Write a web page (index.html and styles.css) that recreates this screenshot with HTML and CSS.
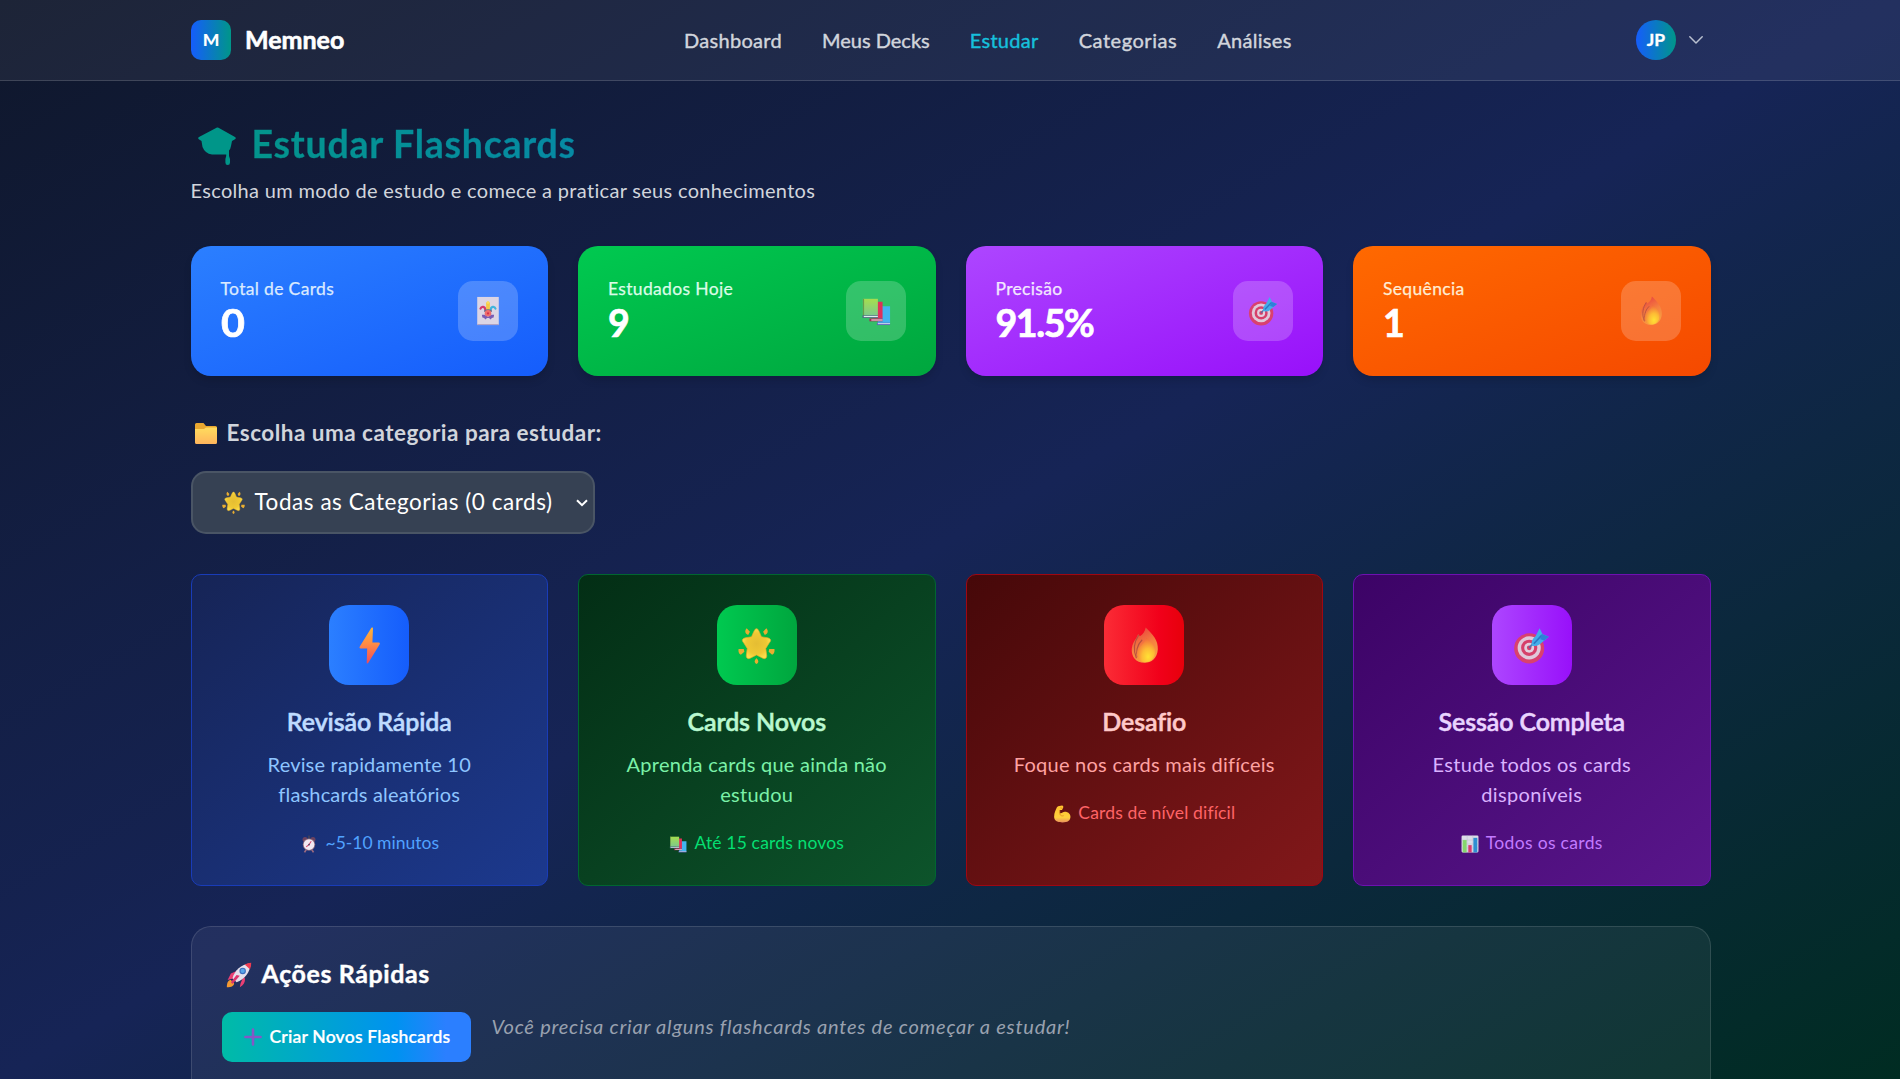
FILE: index.html
```html
<!DOCTYPE html>
<html lang="pt-BR">
<head>
<meta charset="utf-8">
<title>Memneo - Estudar</title>
<link rel="stylesheet" href="styles.css">
</head>
<body>
<svg class="defs" aria-hidden="true">
  <defs>
    <linearGradient id="g-bolt" x1="0" y1="0" x2="0" y2="1"><stop offset="0" stop-color="#fcb53a"/><stop offset=".45" stop-color="#ff8c44"/><stop offset="1" stop-color="#ee4a5c"/></linearGradient>
    <linearGradient id="g-fire" x1=".3" y1="0" x2=".7" y2="1"><stop offset="0" stop-color="#e8413f"/><stop offset=".5" stop-color="#f58040"/><stop offset="1" stop-color="#f9a541"/></linearGradient>
    <radialGradient id="g-flame" cx=".62" cy=".78" r=".75"><stop offset="0" stop-color="#ffe235"/><stop offset=".45" stop-color="#fdbb35"/><stop offset="1" stop-color="#f2683c"/></radialGradient>
    <linearGradient id="g-folder" x1="0" y1="0" x2="0" y2="1"><stop offset="0" stop-color="#ffdc5e"/><stop offset="1" stop-color="#ffb55c"/></linearGradient>
    <radialGradient id="g-star"><stop offset="0" stop-color="#e5bd33"/><stop offset=".7" stop-color="#efc834"/><stop offset="1" stop-color="#fbdd4a"/></radialGradient>
    <linearGradient id="g-book" x1="0" y1="0" x2="0" y2="1"><stop offset="0" stop-color="#a6dd4e"/><stop offset="1" stop-color="#7cc98c"/></linearGradient>
    <linearGradient id="g-arm" x1="0" y1="0" x2="0" y2="1"><stop offset="0" stop-color="#ffc22e"/><stop offset=".7" stop-color="#ffcf3d"/><stop offset="1" stop-color="#e8905e"/></linearGradient>
  </defs>
  <symbol id="e-joker" viewBox="0 0 32 32">
    <path d="M4.500 1h23v30h-23z" fill="#dcd5e4"/><path d="M4.500 30h23v1h-23z" fill="#a99bc0"/>
    <path d="M14 15V8c0-3 4-3 4 0v7z" fill="#f5c945"/><circle cx="16" cy="7" r="1.400" fill="#fbdc5a"/>
    <path d="M13 14.500c0-3.500-4-4-5-1" fill="none" stroke="#d43a6c" stroke-width="2.300" stroke-linecap="round"/>
    <path d="M19 14.500c0-3.500 4-4 5-1" fill="none" stroke="#3fb4dc" stroke-width="2.300" stroke-linecap="round"/>
    <path d="M9.500 20l3 0 3.500 2 3.500-2 3 0-.5 3-2 .500-1 1.500-2-1.500h-2l-2 1.500-1-1.500-2-.500z" fill="#7a5bb4"/>
    <path d="M12 15q4-2 8 0v2h-8z" fill="#5f6b8e"/><circle cx="16" cy="18.300" r="3.500" fill="#ef6d6c"/><circle cx="16" cy="18.600" r="1.200" fill="#d6304c"/>
  </symbol>
  <symbol id="e-books" viewBox="0 0 32 32">
    <path d="M21 11h10v18H18v-2z" fill="#42b5ef"/><path d="M17 28.500h14v2.500H17z" fill="#5b66b8"/><path d="M18 29h13v1H18z" fill="#d5e4f6"/>
    <path d="M14 6h9v18H12z" fill="#df3159"/><path d="M9 24h14v3H9z" fill="#a32c55"/><path d="M11 25h12v1.200H11z" fill="#f3dbe6"/>
    <path d="M2 3h16v18H2z" fill="url(#g-book)"/><path d="M2 3h1.300v18H2z" fill="#6a9b4b"/><path d="M1.500 20.500h16.500v3H1.500z" fill="#4f7182"/><path d="M3 21.200h15v1.300H3z" fill="#dfeeee"/>
  </symbol>
  <symbol id="e-target" viewBox="0 0 32 32">
    <circle cx="14" cy="18.500" r="13" fill="#d9416e"/><circle cx="14" cy="18" r="10" fill="#e0c8da"/><circle cx="14" cy="18" r="7" fill="#d6406a"/><circle cx="14" cy="18" r="4.300" fill="#e2cfde"/><circle cx="14" cy="18" r="2" fill="#d6406a"/>
    <path d="M14 18l8-9" stroke="#596fa5" stroke-width="1.500"/>
    <path d="M16 16c0-4 1-6 3.500-8l3.500-7 2.500 5 5.500 2.500-6 5c-3 3-5 3.500-9 2.500z" fill="#42aee9"/><path d="M18 14.500l7-7.500" stroke="#2b78c5" stroke-width="1.500"/><path d="M25 6l6 2.500-4 3.200-3.500-1z" fill="#2f80d8"/>
  </symbol>
  <symbol id="e-fire" viewBox="0 0 32 32">
    <path d="M17 .5c6 6 11 11 10.500 19C27 27 22 31 16 31 8.500 31 4.500 25.500 5 19c.4-4.500 2-7 4-9.500l1.500-3.500 1.500 2C14.500 6.500 16.500 4 17 .5z" fill="url(#g-fire)"/>
    <path d="M11 7C7.500 12 5.800 19 9 27M14 11c-5 5-5.500 11-4 15" fill="none" stroke="#b9503f" stroke-width="1"/>
    <path d="M17.500 9c5 4 8.500 8.500 7.500 14-.8 5-4.500 7.500-8.500 7.500-5 0-7.500-4-7-8C10 17 16.500 15 17.500 9z" fill="url(#g-flame)"/>
  </symbol>
  <symbol id="e-folder" viewBox="0 0 22 21">
    <path d="M0 1.500Q0 0 1.500 0H8.500l2.500 3h9.500Q22 3 22 4.500V12H0z" fill="#e9a730"/><path d="M0 6h9l2-1.500h11v15Q22 21 20.500 21H1.500Q0 21 0 19.500z" fill="url(#g-folder)"/>
  </symbol>
  <symbol id="e-star" viewBox="0 0 32 32">
    <path d="M16 1.500c1.300 0 2 1.500 4.300 7l5.200.8c3 .7 3.500 2.500 1.500 4.500l-3 4.700.8 6c.2 2.800-1.400 3.500-3.800 2.300l-5-2.600-5 2.600c-2.400 1.200-4 .5-3.800-2.300l.8-6-3-4.700c-2-2-1.500-3.800 1.500-4.500l5.200-.8c2.300-5.500 3-7 4.300-7z" fill="url(#g-star)" stroke="#e3aa2b" stroke-width=".6"/>
    <g fill="#e9ad30"><path d="M7.500 1l2.800 3-1.500 3C6 6 5.500 3 7.500 1zM24.500 1l-2.800 3 1.500 3c2.800-1 3.300-4 1.300-6zM.5 19l4.500 0 .5 2.500L2.500 24C.5 23 .2 21 .5 19zM31.500 19l-4.500 0-.5 2.500 3 2.500c2-1 2.300-3 2-5zM16 27c2 2 2.200 3.500 0 5-2.200-1.500-2-3 0-5z"/></g>
  </symbol>
  <symbol id="e-bolt" viewBox="0 0 32 32"><path d="M17.500 .8c1-.8 1.700-.3 1.500.8L18.500 13.500H24c1 0 1.200.8.700 1.600L15 31c-.8 1-1.600.6-1.400-.6L14 18.500H8.300c-1 0-1.200-.8-.7-1.600z" fill="url(#g-bolt)"/></symbol>
  <symbol id="e-clock" viewBox="0 0 32 32">
    <path d="M11 26l-3 5M21 26l3 5" stroke="#9c6b80" stroke-width="3"/><circle cx="9" cy="8" r="4.500" fill="#6b4260"/><circle cx="23" cy="8" r="4.500" fill="#6b4260"/><path d="M14 1h4v6h-4z" fill="#3c3f5e"/>
    <circle cx="16" cy="17" r="11" fill="#93707f"/><circle cx="16" cy="17" r="9.500" fill="#f3e9f2"/><path d="M11 21l5-4 4-6" fill="none" stroke="#d8486d" stroke-width="1.800"/><circle cx="16" cy="17" r="1.500" fill="#45425f"/>
  </symbol>
  <symbol id="e-arm" viewBox="0 0 32 32"><path d="M9 2l7-1c2 0 3 2 2 4l-2 4-4 0v5c3 2 5-2 9-2 6 0 10 4 10 9 0 7-5 10-14 10-8 0-15-2-15-10C2 13 5 9 7 4z" fill="url(#g-arm)"/><path d="M12 9v7c1 3 4 4 7 3M13 5l4 1" fill="none" stroke="#df8a20" stroke-width="1.400"/></symbol>
  <symbol id="e-chart" viewBox="0 0 32 32"><rect x="1" y="1" width="30" height="30" rx="2" fill="#dcdde8"/><path d="M1 9h30M1 16h30M1 23h30M11 1v30M21 1v30" stroke="#b9bdd0" stroke-width=".8"/><path d="M3 9h7v22H3z" fill="#86d66d"/><path d="M13 18h6v13h-6z" fill="#d93a70"/><path d="M22 5h7v26h-7z" fill="#2f8fd2"/></symbol>
  <symbol id="e-rocket" viewBox="0 0 32 32">
    <path d="M6 22c-3 0-5 3-5 9 6 0 9-2 9-5z" fill="#f59a31"/><path d="M13 11L6 14l-4 8 8-2zM21 19l-3 7-1 5 3-2c3-3 4-6 3-10z" fill="#ea3f73"/>
    <path d="M8 20C11 10 18 3 30 1.500 30 13 23 21 13 25z" fill="#e6e0ec"/><path d="M23 3q4-2 8-2 .3 4-1.500 8z" fill="#ef3b51"/><circle cx="20.500" cy="11" r="4" fill="#3c6fc0"/><circle cx="20.500" cy="11" r="2.600" fill="#58a5ea"/><path d="M17 17l-9 10-2-2 7-9z" fill="#df356e"/>
  </symbol>
  <symbol id="e-plus" viewBox="0 0 32 32"><path d="M16 2.500v27M2.500 16h27" stroke="#8457c6" stroke-width="4.500" stroke-linecap="round"/></symbol>
  <symbol id="e-cap" viewBox="0 0 38 38"><path d="M19 .5Q19.500.2 20.500.8L37 10q1.500 1.200 0 2.300L34 14l-1 5q-.5 3-2 4.500v5.500l1 3v3.500q0 2.500-2.300 2.500T27.400 35.500V32l.8-3v-1.500H14Q7 26.500 4.500 20L3.500 14 .8 12.300Q-.5 11 1 10z" fill="#009689"/></symbol>
</svg>

<header class="topbar">
  <div class="topbar-inner">
    <a class="brand"><span class="brand-mark">M</span><span class="brand-name">Memneo</span></a>
    <nav class="nav">
      <a>Dashboard</a><a>Meus Decks</a><a class="active">Estudar</a><a>Categorias</a><a>Análises</a>
    </nav>
    <div class="user"><span class="avatar">JP</span><svg class="chevron" viewBox="0 0 14 8"><path d="M.8.8 7 7 13.200.8" fill="none" stroke="#b9c0cf" stroke-width="1.500" stroke-linecap="round" stroke-linejoin="round"/></svg></div>
  </div>
</header>

<main class="page">
  <h1 class="title"><svg class="title-icon"><use href="#e-cap"/></svg><span>Estudar Flashcards</span></h1>
  <p class="subtitle">Escolha um modo de estudo e comece a praticar seus conhecimentos</p>

  <section class="stats">
    <div class="stat blue"><div><p class="stat-label">Total de Cards</p><p class="stat-value zero">0</p></div><span class="stat-icon"><svg><use href="#e-joker"/></svg></span></div>
    <div class="stat green"><div><p class="stat-label">Estudados Hoje</p><p class="stat-value">9</p></div><span class="stat-icon"><svg><use href="#e-books"/></svg></span></div>
    <div class="stat purple"><div><p class="stat-label">Precisão</p><p class="stat-value">91.5%</p></div><span class="stat-icon"><svg><use href="#e-target"/></svg></span></div>
    <div class="stat orange"><div><p class="stat-label">Sequência</p><p class="stat-value">1</p></div><span class="stat-icon"><svg><use href="#e-fire"/></svg></span></div>
  </section>

  <div class="category-label"><svg><use href="#e-folder"/></svg><span>Escolha uma categoria para estudar:</span></div>
  <div class="select" role="combobox"><svg class="select-icon"><use href="#e-star"/></svg><span>Todas as Categorias (0 cards)</span><svg class="select-arrow" viewBox="0 0 12 8"><path d="M1 1.200 6 6.200l5-5" fill="none" stroke="#fff" stroke-width="2"/></svg></div>

  <section class="modes">
    <article class="mode m-blue"><span class="mode-icon"><svg><use href="#e-bolt"/></svg></span><h3>Revisão Rápida</h3><p class="desc">Revise rapidamente 10<br>flashcards aleatórios</p><p class="meta"><svg><use href="#e-clock"/></svg><span>~5-10 minutos</span></p></article>
    <article class="mode m-green"><span class="mode-icon"><svg><use href="#e-star"/></svg></span><h3>Cards Novos</h3><p class="desc">Aprenda cards que ainda não<br>estudou</p><p class="meta"><svg><use href="#e-books"/></svg><span>Até 15 cards novos</span></p></article>
    <article class="mode m-red"><span class="mode-icon"><svg><use href="#e-fire"/></svg></span><h3>Desafio</h3><p class="desc">Foque nos cards mais difíceis</p><p class="meta"><svg><use href="#e-arm"/></svg><span>Cards de nível difícil</span></p></article>
    <article class="mode m-purple"><span class="mode-icon"><svg><use href="#e-target"/></svg></span><h3>Sessão Completa</h3><p class="desc">Estude todos os cards<br>disponíveis</p><p class="meta"><svg><use href="#e-chart"/></svg><span>Todos os cards</span></p></article>
  </section>

  <section class="actions">
    <h2><svg><use href="#e-rocket"/></svg><span>Ações Rápidas</span></h2>
    <div class="actions-row">
      <a class="btn"><svg><use href="#e-plus"/></svg><span>Criar Novos Flashcards</span></a>
      <p class="hint">Você precisa criar alguns flashcards antes de começar a estudar!</p>
    </div>
  </section>
</main>
</body>
</html>
```
FILE: styles.css
```css
* { box-sizing: border-box; margin: 0; padding: 0; }
html { font-size: 20px; }
body {
  display: flex;
  flex-direction: column;
  height: 1079px;
  overflow: hidden;
  font-family: Lato, "Open Sans", sans-serif;
  font-size: 1rem;
  line-height: 1.5;
  color: #fff;
  background: linear-gradient(to bottom right, #0f172b, #162456 50%, #002c22);
}
svg { display: block; flex: none; overflow: visible; }
.defs { position: absolute; width: 0; height: 0; }

.topbar { flex: none; height: 81px; border-bottom: 1px solid rgba(255, 255, 255, .15); background: rgba(255, 255, 255, .06); }
.topbar-inner { display: grid; grid-template-columns: 493px 1fr auto; align-items: center; height: 80px; padding: 0 197px 0 191px; }
.brand { display: flex; align-items: center; gap: 14px; }
.brand-mark { display: flex; align-items: center; justify-content: center; width: 40px; height: 40px; border-radius: 10px; background: linear-gradient(to right, #155dfc, #009689); font-size: 17.5px; font-weight: 900; line-height: 1; }
.brand-name { margin-top: -1px; font-size: 25px; font-weight: 700; letter-spacing: -.02px; line-height: 35px; -webkit-text-stroke: .6px; }
.nav { display: flex; gap: 40px; color: #d1d5dc; line-height: 30px; letter-spacing: .3px; -webkit-text-stroke: .4px; }
.nav a:nth-child(2) { letter-spacing: 0; }
.nav a:nth-child(4) { letter-spacing: .55px; }
.nav .active { color: #16c0dd; }
.user { display: flex; align-items: center; gap: 13px; }
.avatar { display: flex; align-items: center; justify-content: center; width: 40px; height: 40px; border-radius: 50%; background: linear-gradient(to right, #155dfc, #009689); font-size: 17.5px; font-weight: 700; line-height: 1; -webkit-text-stroke: .3px; }
.chevron { width: 14px; height: 8px; }

.page { flex: 1; min-height: 0; overflow: hidden; padding: 40px 189.5px 0 190.5px; }
.title { display: flex; align-items: center; height: 45px; margin-bottom: 10px; font-size: 37.5px; font-weight: 700; letter-spacing: .75px; line-height: 45px; }
.title span { margin-left: 16px; color: transparent; background: linear-gradient(to right, #03948c, #068aa4); -webkit-background-clip: text; background-clip: text; -webkit-text-stroke: .3px transparent; }
.title-icon { width: 38px; height: 38px; margin-left: 7px; margin-top: 4px; }
.subtitle { height: 30px; margin-top: -1px; margin-bottom: 41px; color: #d1d5dc; line-height: 30px; letter-spacing: .32px; }

.stats, .modes { display: grid; grid-template-columns: repeat(4, 1fr); gap: 30px; }
.stat { display: flex; align-items: center; justify-content: space-between; height: 130px; padding: 30px; border-radius: 20px; box-shadow: 0 5px 8px -1px rgba(0, 0, 0, .15); }
.blue { background: linear-gradient(to bottom right, #2b7fff, #155dfc); }
.green { background: linear-gradient(to bottom right, #00c950, #00a63e); }
.purple { background: linear-gradient(to bottom right, #ad46ff, #9810fa); }
.orange { background: linear-gradient(to bottom right, #ff6900, #f54900); }
.stat-label { font-size: 17.5px; line-height: 25px; letter-spacing: .34px; -webkit-text-stroke: .25px; }
.stat-value { margin: -1px 0 1px; font-size: 37.5px; font-weight: 700; line-height: 45px; letter-spacing: -1.4px; -webkit-text-stroke: .7px; }
.stat-value.zero { transform: scaleX(1.1); transform-origin: left; }
.stat.blue .stat-label { color: #dbeafe; }
.stat.green .stat-label { color: #dcfce7; }
.stat.purple .stat-label { color: #f3e8ff; }
.stat.orange .stat-label { color: #ffedd4; }
.stat-icon { display: flex; align-items: center; justify-content: center; width: 60px; height: 60px; border-radius: 15px; background: rgba(255, 255, 255, .2); }
.stat-icon svg { width: 30px; height: 30px; margin-bottom: 1px; }

.category-label { display: flex; align-items: center; height: 35px; margin: 40px 0 20px; color: #d1d5dc; font-size: 22.5px; font-weight: 700; line-height: 35px; letter-spacing: .48px; }
.category-label svg { width: 22px; height: 21px; margin: 0 10px 0 4px; }
.category-label span, .select span, .meta span, .actions h2 span { padding-bottom: 2px; }
.select { display: flex; align-items: center; width: 404px; height: 63px; margin-bottom: 40px; padding: 0 5px 0 29px; border: 2px solid #4a5565; border-radius: 15px; background: #364153; font-size: 22.5px; line-height: 30px; letter-spacing: .55px; }
.select-icon { width: 23px; height: 23px; margin-right: 10px; }
.select-arrow { width: 12px; height: 8px; margin-left: auto; }

.mode { display: flex; flex-direction: column; align-items: center; height: 312px; padding: 30px; border: 1px solid; border-radius: 10px; text-align: center; }
.mode-icon { display: flex; align-items: center; justify-content: center; flex: none; width: 80px; height: 80px; margin-bottom: 20px; border-radius: 20px; }
.mode-icon svg { width: 37px; height: 37px; }
.mode h3 { margin: -1px 0 11px; font-size: 25px; font-weight: 600; line-height: 35px; letter-spacing: -.12px; -webkit-text-stroke: .5px; }
.desc { margin: -1px 0 1px; line-height: 30px; letter-spacing: .25px; white-space: nowrap; }
.m-blue .desc { letter-spacing: .16px; }
.m-purple .desc { letter-spacing: .33px; }
.meta { display: flex; align-items: center; gap: 7px; margin-top: 20px; font-size: 17.5px; line-height: 25px; letter-spacing: .16px; }
.meta svg { width: 18px; height: 18px; }
.m-blue .meta { gap: 8px; letter-spacing: 0; }
.m-purple .meta { letter-spacing: .32px; }
.m-blue { border-color: #193cb8; background: linear-gradient(to bottom right, #162456, #1c398e); color: #8ec5ff; }
.m-blue .mode-icon { background: linear-gradient(to right, #2b7fff, #155dfc); }
.m-blue h3 { color: #bedbff; }
.m-blue .meta { color: #51a2ff; }
.m-green { border-color: #016630; background: linear-gradient(to bottom right, #032e15, #0d542b); color: #7bf1a8; }
.m-green .mode-icon { background: linear-gradient(to right, #00c950, #00a63e); }
.m-green h3 { color: #b9f8cf; }
.m-green .meta { color: #05df72; }
.m-red { border-color: #9f0712; background: linear-gradient(to bottom right, #460809, #82181a); color: #ffa2a2; }
.m-red .mode-icon { background: linear-gradient(to right, #fb2c36, #f1001a 70%, #e7000b); }
.m-red h3 { color: #ffc9c9; }
.m-red .meta { color: #ff6467; }
.m-purple { border-color: #6e11b0; background: linear-gradient(to bottom right, #3c0366, #59168b); color: #dab2ff; }
.m-purple .mode-icon { background: linear-gradient(to right, #ad46ff, #9810fa); }
.m-purple h3 { color: #e9d4ff; }
.m-purple .meta { color: #c27aff; }

.actions { height: 153px; margin-top: 40px; padding: 30px; border: 1px solid rgba(255, 255, 255, .12); border-bottom: 0; border-radius: 20px 20px 0 0; background: rgba(255, 255, 255, .06); }
.actions h2 { display: flex; align-items: center; height: 35px; margin-bottom: 20px; font-size: 25px; font-weight: 700; line-height: 35px; letter-spacing: .6px; -webkit-text-stroke: .4px; }
.actions h2 svg { width: 26px; height: 26px; margin: 0 10px 0 4px; }
.actions-row { display: flex; align-items: flex-start; gap: 21px; }
.btn { display: flex; align-items: center; width: 249px; height: 50px; padding-left: 22px; border-radius: 10px; background: linear-gradient(to right, #00bba7, #0092f0 70%, #2b7fff 90%); font-size: 17.5px; font-weight: 600; letter-spacing: .2px; -webkit-text-stroke: .2px; }
.btn svg { width: 18px; height: 18px; margin-right: 8px; }
.hint { margin-top: -1px; color: #99a1af; font-style: italic; line-height: 30px; letter-spacing: .78px; white-space: nowrap; }
```
